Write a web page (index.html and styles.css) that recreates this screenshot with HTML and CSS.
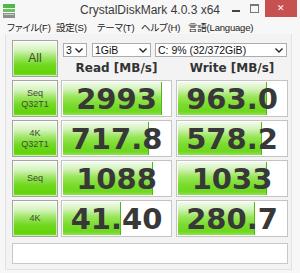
FILE: index.html
```html
<!DOCTYPE html>
<html>
<head>
    <title>CrystalDiskMark 4.0.3 x64</title>
    <link rel="stylesheet" href="styles.css">
</head>
<body>
    <div class="window">
        <div class="titlebar">
            <svg class="app-icon" width="12" height="14" viewBox="0 0 12 14">
                <rect x="0" y="0" width="12" height="4" fill="#4fb848"/>
                <rect x="0" y="5" width="12" height="3" fill="#6cc35c"/>
                <rect x="0" y="9" width="12" height="5" fill="#8a8f8a"/>
                <rect x="1" y="10" width="10" height="1" fill="#c9ccc9"/>
            </svg>
            <div class="title">CrystalDiskMark 4.0.3 x64</div>
            <div class="controls">
                <span class="ctl-min"></span>
                <span class="ctl-max"></span>
                <span class="ctl-close">&#x2715;</span>
            </div>
        </div>

        <div class="menubar">
            <span class="menu-file"><span class="ja">ファイル</span>(F)</span>
            <span class="menu-settings"><span class="ja">設定</span>(S)</span>
            <span class="menu-theme"><span class="ja">テーマ</span>(T)</span>
            <span class="menu-help"><span class="ja">ヘルプ</span>(H)</span>
            <span><span class="ja">言語</span>(Language)</span>
        </div>

        <div class="client">
            <div class="grid">
                <div class="btn btn-all">All</div>
                <div class="head">
                    <div class="selects">
                        <div class="combo combo-count">3<svg class="chev" width="8" height="5" viewBox="0 0 8 5"><polyline points="0.5,0.5 4,4 7.5,0.5" fill="none" stroke="#222" stroke-width="1.4"/></svg></div>
                        <div class="combo combo-size">1GiB<svg class="chev" width="8" height="5" viewBox="0 0 8 5"><polyline points="0.5,0.5 4,4 7.5,0.5" fill="none" stroke="#222" stroke-width="1.4"/></svg></div>
                        <div class="combo combo-drive">C: 9% (32/372GiB)<svg class="chev" width="8" height="5" viewBox="0 0 8 5"><polyline points="0.5,0.5 4,4 7.5,0.5" fill="none" stroke="#222" stroke-width="1.4"/></svg></div>
                    </div>
                    <div class="head-labels">
                        <span>Read [MB/s]</span>
                        <span>Write [MB/s]</span>
                    </div>
                </div>

                <div class="btn">Seq<br>Q32T1</div>
                <div class="meter"><div class="fill" style="width: 98px"></div><span class="value">2993</span></div>
                <div class="meter write"><div class="fill" style="width: 88px"></div><span class="value">963.0</span></div>

                <div class="btn">4K<br>Q32T1</div>
                <div class="meter"><div class="fill" style="width: 85px"></div><span class="value">717.8</span></div>
                <div class="meter write"><div class="fill" style="width: 83px"></div><span class="value">578.2</span></div>

                <div class="btn">Seq</div>
                <div class="meter"><div class="fill" style="width: 89px"></div><span class="value">1088</span></div>
                <div class="meter write"><div class="fill" style="width: 88px"></div><span class="value">1033</span></div>

                <div class="btn">4K</div>
                <div class="meter"><div class="fill" style="width: 57px"></div><span class="value">41.40</span></div>
                <div class="meter write"><div class="fill" style="width: 76px"></div><span class="value">280.7</span></div>
            </div>
            <div class="comment"></div>
        </div>
    </div>
</body>
</html>
```

FILE: styles.css
```css
body {
    margin: 0;
    font-family: "Liberation Sans", Arial, sans-serif;
    background-color: #f7f7f7;
}
.window {
    width: 300px;
    height: 273px;
    overflow: hidden;
}
.titlebar {
    display: grid;
    grid-template-columns: 1fr auto 1fr;
    align-items: center;
    height: 20px;
}
.app-icon {
    margin-left: 3px;
    margin-top: 1px;
}
.title {
    font-size: 12px;
    color: #3a3a3a;
}
.controls {
    display: flex;
    justify-content: flex-end;
    align-items: flex-start;
    height: 20px;
}
.ctl-min {
    width: 8px;
    height: 2px;
    margin-top: 10px;
    background-color: #444;
}
.ctl-max {
    width: 7px;
    height: 6px;
    margin-top: 4px;
    margin-left: 10px;
    border: 1px solid #777;
    border-top-width: 2px;
}
.ctl-close {
    width: 32px;
    height: 17px;
    margin-left: 6px;
    margin-right: 3px;
    background-color: #c75050;
    color: #fff;
    font-size: 9px;
    line-height: 17px;
    text-align: center;
}
.menubar {
    display: flex;
    height: 14px;
    padding-left: 7px;
    font-family: "Liberation Sans", sans-serif;
    font-size: 9.5px;
    letter-spacing: -0.2px;
    line-height: 14px;
    color: #1a1a1a;
    white-space: nowrap;
}
.menubar > span {
    flex: none;
}
.ja {
    font-family: "Noto Sans CJK JP", sans-serif;
    font-size: 9.5px;
    font-feature-settings: "palt";
}
.menu-file {
    width: 49px;
}
.menu-settings {
    width: 41px;
}
.menu-theme {
    width: 44px;
}
.menu-help {
    width: 47px;
}
.client {
    margin: 0 8px 0 5px;
    height: 236px;
    border: 1px solid #e2e2e2;
    border-top: none;
    background-color: #f3f3f3;
    padding: 6px 0 0 6px;
    box-sizing: border-box;
}
.grid {
    display: grid;
    grid-template-columns: 46px 111px 113px;
    grid-auto-rows: 37px;
    gap: 3px;
}
.btn {
    display: flex;
    align-items: center;
    justify-content: center;
    text-align: center;
    border: 1px solid #a4a4a4;
    box-shadow: inset 0 0 0 1px rgba(255, 255, 255, 0.6);
    background: linear-gradient(to bottom, #f4fcef 0%, #d6f4bf 25%, #9be55e 48%, #72d923 68%, #62d40a 90%, #79da2c 100%);
    font-size: 9px;
    line-height: 11px;
    color: #3d4a34;
    box-sizing: border-box;
}
.btn-all {
    font-size: 12px;
}
.head {
    grid-column: span 2;
}
.selects {
    display: flex;
    margin-top: 3px;
    margin-left: 2px;
    font-size: 10.5px;
}
.combo {
    display: flex;
    align-items: center;
    justify-content: space-between;
    height: 14px;
    padding: 0 3px 0 2px;
    border: 1px solid #adadad;
    background-color: #fff;
    color: #111;
    box-sizing: border-box;
}
.combo-count {
    width: 24px;
}
.combo-size {
    width: 59px;
    margin-left: 5px;
}
.combo-drive {
    width: 132px;
    margin-left: 4px;
}
.head-labels {
    display: grid;
    grid-template-columns: 111px 1fr;
    column-gap: 4px;
    margin-top: 4px;
    font-family: "DejaVu Sans", sans-serif;
    font-weight: bold;
    font-size: 12px;
    color: #333;
    text-align: center;
}
.meter {
    position: relative;
    display: flex;
    align-items: center;
    justify-content: center;
    border: 1px solid #c4c4c4;
    background-color: #fff;
    box-sizing: border-box;
}
.meter.write {
    margin-left: 1px;
}
.fill {
    position: absolute;
    top: 1px;
    bottom: 1px;
    left: 1px;
    border-right: 1px solid #52b51c;
    background: linear-gradient(to bottom, #f2fbec 0%, #d3f2ba 22%, #9ae65a 45%, #7bdc2f 68%, #6dd81d 88%, #8ee052 100%);
}
.value {
    position: relative;
    font-family: "DejaVu Sans", sans-serif;
    font-weight: bold;
    font-size: 29px;
    color: #383838;
}
.comment {
    height: 21px;
    width: 276px;
    margin-top: 6px;
    border: 1px solid #c8c8c8;
    background-color: #fff;
    box-sizing: border-box;
}
```
